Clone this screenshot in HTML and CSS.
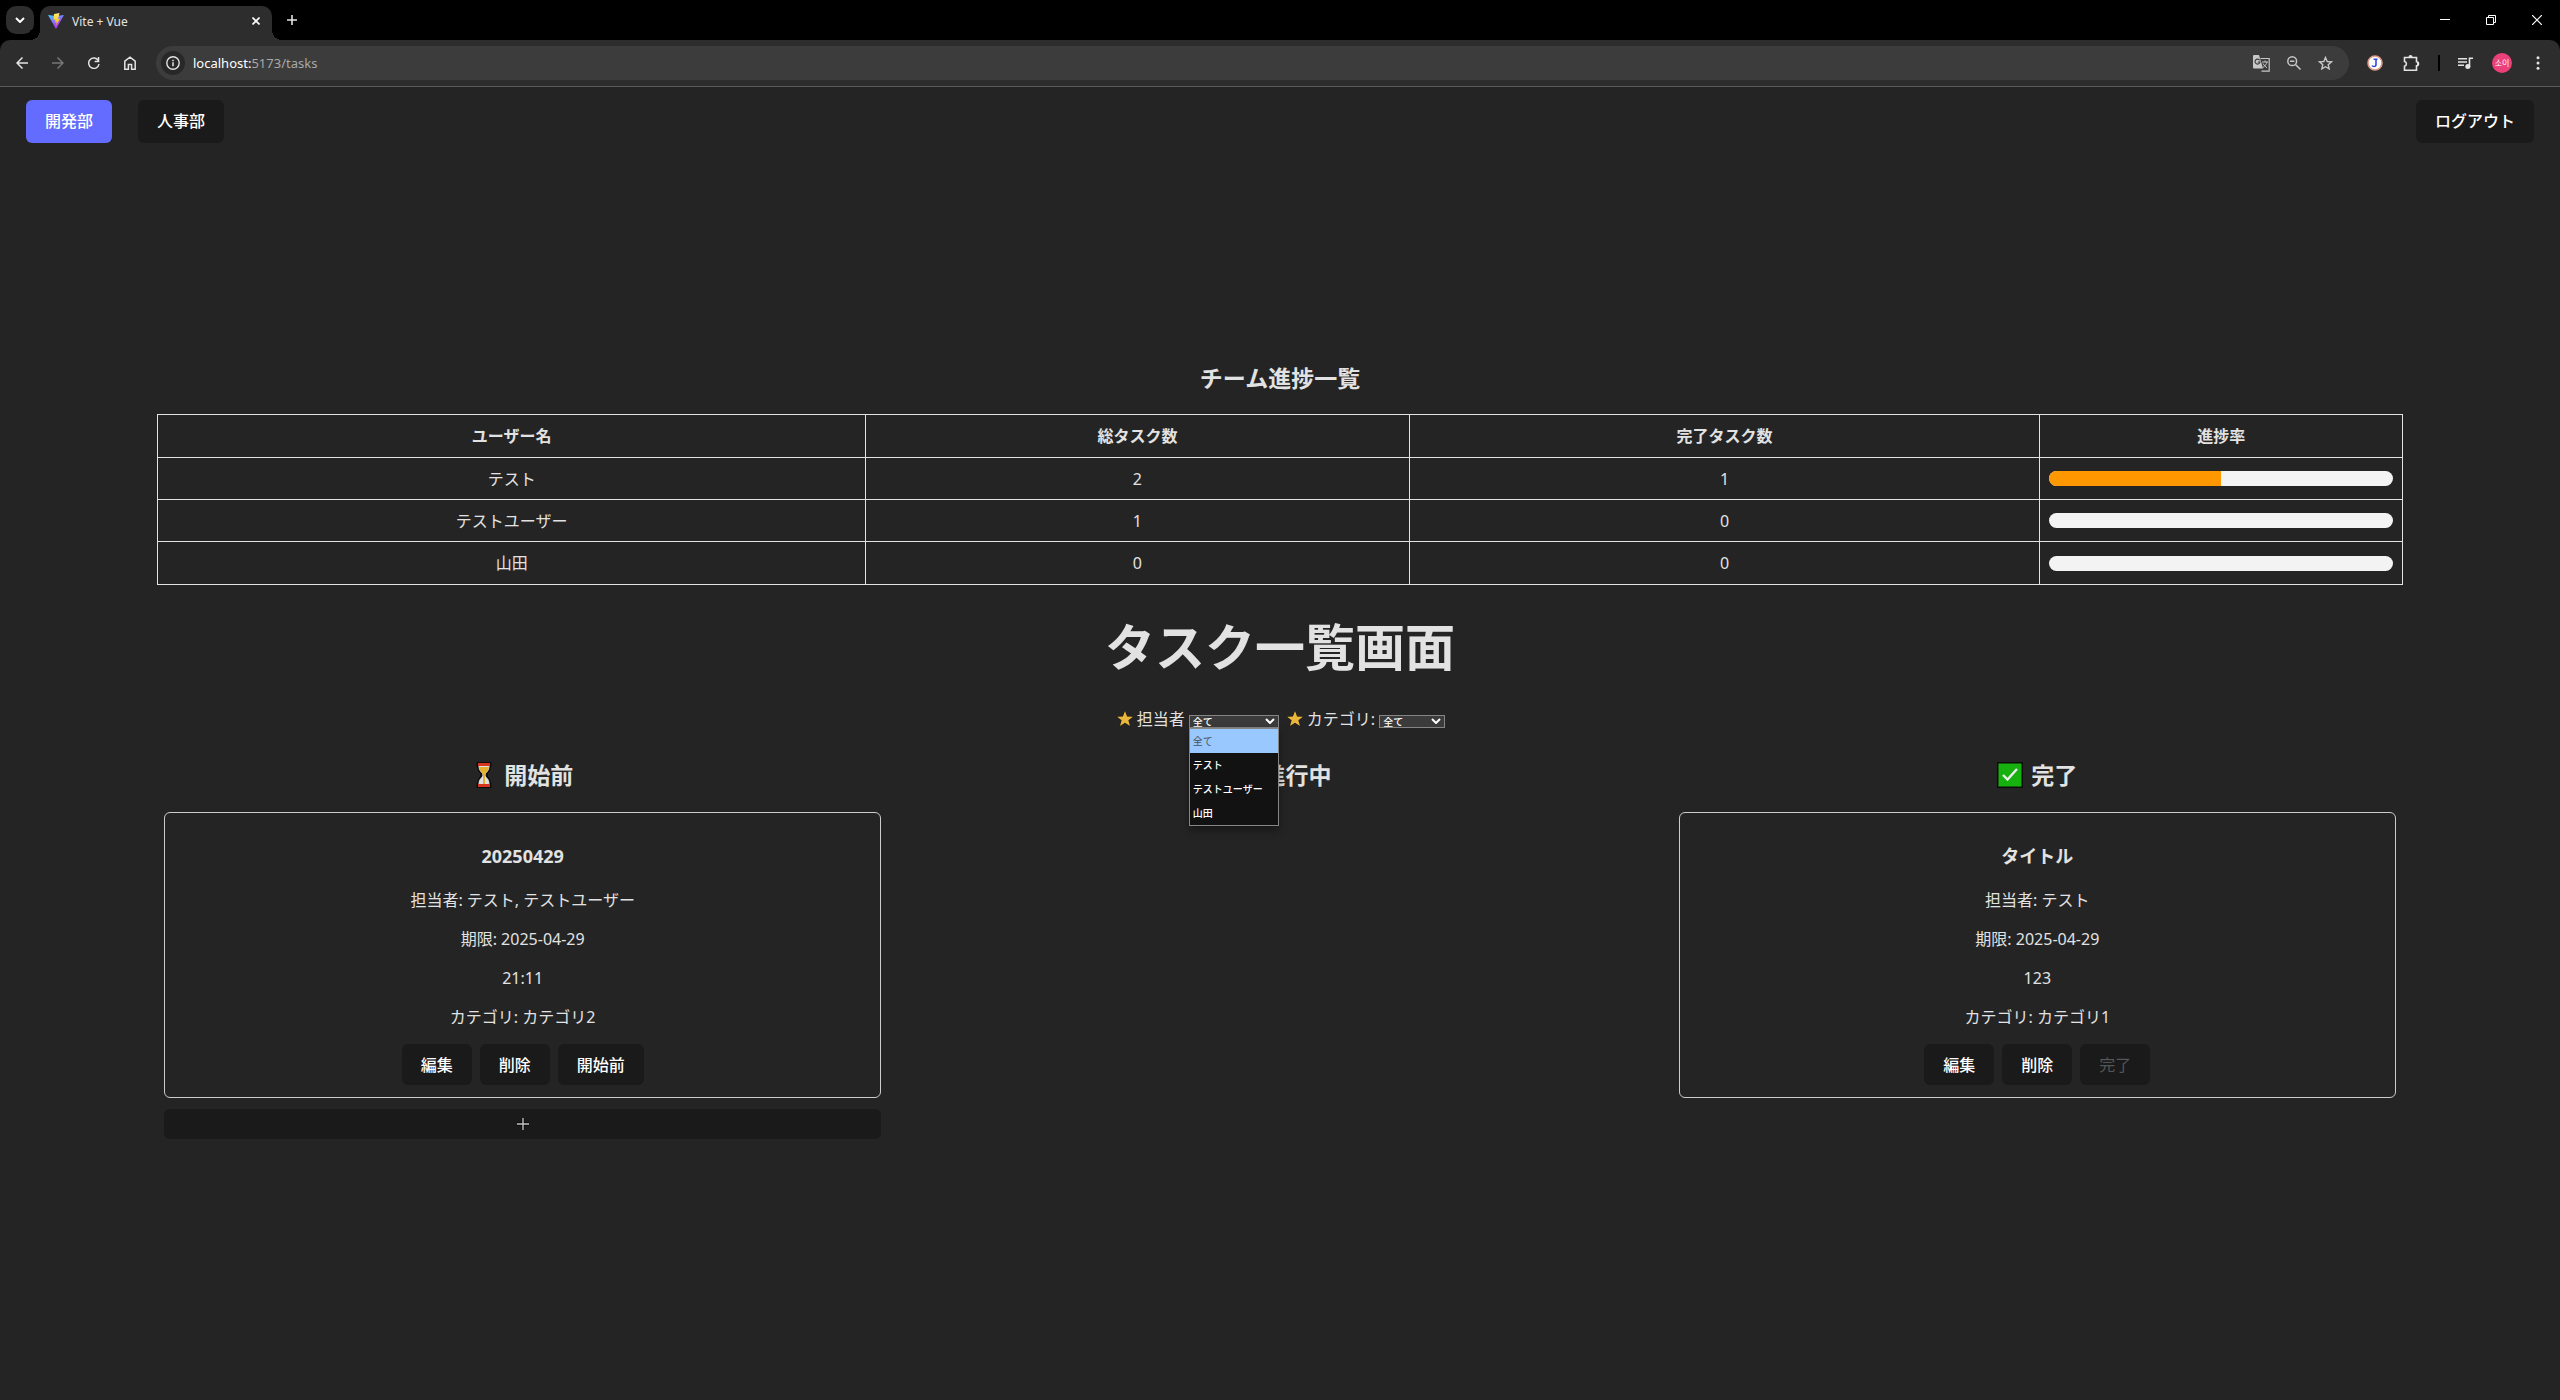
FILE: index.html
```html
<!DOCTYPE html>
<html lang="ja">
<head>
<meta charset="utf-8">
<title>Vite + Vue</title>
<meta name="viewport" content="width=device-width, initial-scale=1">
<link rel="stylesheet" href="styles.css">
</head>
<body>
<header class="browser">
  <div class="tabstrip">
    <button class="tab-search" aria-label="タブを検索"><svg width="10" height="6" viewBox="0 0 10 6"><path d="M1 1l4 4 4-4" fill="none" stroke="#fff" stroke-width="2"/></svg></button>
    <div class="tab">
      <svg width="16" height="16" viewBox="0 0 16 16"><defs><linearGradient id="v" x1="0" y1="0" x2="0.6" y2="1"><stop offset="0" stop-color="#41d1ff"/><stop offset=".7" stop-color="#a04cff"/><stop offset="1" stop-color="#bd34fe"/></linearGradient><linearGradient id="b" x1="0" y1="0" x2="0" y2="1"><stop offset="0" stop-color="#ffea83"/><stop offset=".4" stop-color="#ffdd35"/><stop offset="1" stop-color="#ff9a10"/></linearGradient></defs><path d="M0 2l8 1 8-1-8 14z" fill="url(#v)"/><path d="M11.500 0L6 1l-.4 6 2-.4-.6 3 1.600-.5-.8 3.600 4.200-7-2 .3z" fill="url(#b)"/></svg>
      <span class="tab-title">Vite + Vue</span>
      <button class="icon-button" aria-label="タブを閉じる"><svg width="8" height="8" viewBox="0 0 8 8"><path d="M.5.5l7 7M7.500.5l-7 7" stroke="#fff" stroke-width="1.600"/></svg></button>
    </div>
    <button class="icon-button new-tab" aria-label="新しいタブ"><svg width="10" height="10" viewBox="0 0 10 10"><path d="M5 0v10M0 5h10" stroke="#e3e3e3" stroke-width="1.600"/></svg></button>
    <div class="window-controls">
      <button class="icon-button" aria-label="最小化"><svg width="10" height="10" viewBox="0 0 10 10"><path d="M0 4.500h10" stroke="#fff"/></svg></button>
      <button class="icon-button" aria-label="元に戻す"><svg width="10" height="10" viewBox="0 0 10 10"><path d="M.5 2.500h7v7h-7zM2.500 2.500v-2h7v7h-2" fill="none" stroke="#fff"/></svg></button>
      <button class="icon-button" aria-label="閉じる"><svg width="10" height="10" viewBox="0 0 10 10"><path d="M0 0l10 10M10 0L0 10" stroke="#fff" stroke-width="1.200"/></svg></button>
    </div>
  </div>
  <div class="toolbar">
    <div class="nav">
      <button class="icon-button" aria-label="戻る"><svg width="12" height="12" viewBox="0 0 12 12"><path d="M12 6H1M6.500.5L1 6l5.500 5.500" fill="none" stroke="#e3e3e3" stroke-width="1.500"/></svg></button>
      <button class="icon-button" aria-label="進む" disabled><svg width="12" height="12" viewBox="0 0 12 12"><path d="M0 6h11M5.500.5L11 6l-5.500 5.500" fill="none" stroke="#757575" stroke-width="1.500"/></svg></button>
      <button class="icon-button" aria-label="再読み込み"><svg width="12" height="12" viewBox="0 0 12 12"><path d="M10.300 3.500A5.200 5.200 0 1 0 11 7" fill="none" stroke="#e3e3e3" stroke-width="1.500"/><path d="M11.300 0v5.200H6.600V3.700h3.200V0z" fill="#e3e3e3"/></svg></button>
      <button class="icon-button" aria-label="ホーム"><svg width="12" height="14" viewBox="0 0 12 14"><path d="M.8 13.200v-8L6 1.200l5.200 4v8H7.600V8.500H4.400v4.700z" fill="none" stroke="#e3e3e3" stroke-width="1.500"/></svg></button>
    </div>
    <div class="omnibox">
      <button class="site-info" aria-label="サイト情報"><svg width="14" height="14" viewBox="0 0 14 14"><circle cx="7" cy="7" r="6.200" fill="none" stroke="#e3e3e3" stroke-width="1.400"/><path d="M7 6.300V10.200M7 3.700v1.500" stroke="#e3e3e3" stroke-width="1.500"/></svg></button>
      <p class="url"><span class="host">localhost:</span>5173/tasks</p>
      <button class="icon-button" aria-label="翻訳"><svg width="17" height="17" viewBox="0 0 17 17"><path d="M7.500 3.500h8.700v12.700H8.500" fill="none" stroke="#c7c7c7" stroke-width="1.200"/><path d="M1 0h5l4 13.500H1a1 1 0 0 1-1-1V1a1 1 0 0 1 1-1z" fill="#c7c7c7"/><path d="M6.700 5.300A2.500 2.500 0 1 0 7 7H4.700" fill="none" stroke="#3c3c3c" stroke-width="1.200"/><path d="M9 7h6M12 5.500V7M14 7c-.5 2-2 4-4 5.500M10 8.500c1 2 2.500 3.200 4 4.200" fill="none" stroke="#c7c7c7"/></svg></button>
      <button class="icon-button" aria-label="ズーム"><svg width="14" height="14" viewBox="0 0 14 14"><circle cx="5.200" cy="5.200" r="4.400" fill="none" stroke="#c7c7c7" stroke-width="1.500"/><path d="M8.500 8.500l5 5M3 5.200h4.400" stroke="#c7c7c7" stroke-width="1.500"/></svg></button>
      <button class="icon-button" aria-label="ブックマーク"><svg width="15" height="14" viewBox="0 0 15 14"><path d="M7.500 1.500l1.700 4 4.300.4-3.300 2.800 1 4.200-3.700-2.200-3.700 2.200 1-4.200L1.500 5.900l4.300-.4z" fill="none" stroke="#c7c7c7" stroke-width="1.400"/></svg></button>
    </div>
    <div class="extensions">
      <button class="icon-button extension" aria-label="拡張機能 J"><svg width="16" height="16" viewBox="0 0 16 16"><circle cx="8" cy="8" r="7" fill="#fff" stroke="#dc9a83" stroke-width="1.600"/><path d="M6.500 4.200h4M9 4.200v5.300q0 2-2 2-1.500 0-2-1" fill="none" stroke="#3545e8" stroke-width="1.600"/></svg></button>
      <button class="icon-button" aria-label="拡張機能"><svg width="17" height="17" viewBox="0 0 17 17"><path d="M1.500 2.500h12v4.200a2 2 0 0 1 0 4v4.500h-12v-4a2.400 2.400 0 0 0 0-4.700z" fill="none" stroke="#e3e3e3" stroke-width="1.600"/><path d="M5.500 2a2 2 0 0 1 4 0zM14 6.800a2 2 0 0 1 0 4z" fill="#e3e3e3"/></svg></button>
      <span class="divider"></span>
      <button class="icon-button" aria-label="メディア"><svg width="16" height="13" viewBox="0 0 16 13"><path d="M0 1.800h9M0 5h9M0 8.200h6" stroke="#e3e3e3" stroke-width="1.500"/><circle cx="9.800" cy="9.500" r="2.500" fill="#e3e3e3"/><path d="M11.500 10V1.300H15" fill="none" stroke="#e3e3e3" stroke-width="1.600"/></svg></button>
      <button class="avatar" aria-label="プロフィール">소이</button>
      <button class="icon-button" aria-label="メニュー"><svg width="4" height="14" viewBox="0 0 4 14"><g fill="#e3e3e3"><circle cx="2" cy="1.700" r="1.500"/><circle cx="2" cy="7" r="1.500"/><circle cx="2" cy="12.300" r="1.500"/></g></svg></button>
    </div>
  </div>
</header>

<nav class="teams">
  <button class="button active">開発部</button>
  <button class="button">人事部</button>
  <button class="button logout">ログアウト</button>
</nav>

<main class="page">
  <h2 class="heading">チーム進捗一覧</h2>
  <table class="progress-table">
    <colgroup><col class="col-user"><col class="col-total"><col class="col-done"><col class="col-rate"></colgroup>
    <thead><tr><th>ユーザー名</th><th>総タスク数</th><th>完了タスク数</th><th>進捗率</th></tr></thead>
    <tbody>
      <tr><td>テスト</td><td>2</td><td>1</td><td><div class="bar"><div class="bar-fill" style="width:50%"></div></div></td></tr>
      <tr><td>テストユーザー</td><td>1</td><td>0</td><td><div class="bar"></div></td></tr>
      <tr><td>山田</td><td>0</td><td>0</td><td><div class="bar"></div></td></tr>
    </tbody>
  </table>

  <h1 class="title">タスク一覧画面</h1>

  <div class="filters">
    <svg class="star" width="16" height="16" viewBox="0 0 16 16"><path d="M8 0l2.100 5.500 5.900.2-4.600 3.600 1.600 5.700-5-3.300L3 15l1.600-5.700L0 5.700l5.900-.2z" fill="#e9b53a" stroke="#111" stroke-width="1" paint-order="stroke"/></svg>
    <label for="member">担当者</label>
    <div class="select-wrap member">
      <select id="member"><option>全て</option><option>テスト</option><option>テストユーザー</option><option>山田</option></select>
      <svg class="chevron" width="10" height="6" viewBox="0 0 10 6"><path d="M1 1l4 4 4-4" fill="none" stroke="#fff" stroke-width="2"/></svg>
      <ul class="menu"><li class="selected">全て</li><li>テスト</li><li>テストユーザー</li><li>山田</li></ul>
    </div>
    <svg class="star second" width="16" height="16" viewBox="0 0 16 16"><path d="M8 0l2.100 5.500 5.900.2-4.600 3.600 1.600 5.700-5-3.300L3 15l1.600-5.700L0 5.700l5.900-.2z" fill="#e9b53a" stroke="#111" stroke-width="1" paint-order="stroke"/></svg>
    <label for="category">カテゴリ:</label>
    <div class="select-wrap category">
      <select id="category"><option>全て</option></select>
      <svg class="chevron" width="10" height="6" viewBox="0 0 10 6"><path d="M1 1l4 4 4-4" fill="none" stroke="#fff" stroke-width="2"/></svg>
    </div>
  </div>

  <div class="board">
    <section class="column">
      <h2 class="heading"><svg width="24" height="26" viewBox="0 0 24 26"><path d="M5 0h14v5l-1 1c0 4-3 5-3 7s3 3 3 7l1 1v5H5v-5l1-1c0-4 3-5 3-7S6 10 6 6L5 5z" fill="#0c0c0c" stroke="#0c0c0c"/><path d="M7 4h10c0 6-4 6-4 9s4 3 4 9H7c0-6 4-6 4-9S7 10 7 4z" fill="#e2e2e2" stroke="#e2e2e2"/><path d="M7 5h10c-1 5-3 5-4 8v9h-2v-9C10 10 8 10 7 5z" fill="#e3b02f"/><path d="M6 1h12v3H6zM6 22h12v3H6z" fill="#d8361c"/></svg>開始前</h2>
      <article class="card">
        <h3>20250429</h3>
        <p>担当者: テスト, テストユーザー</p>
        <p>期限: 2025-04-29</p>
        <p>21:11</p>
        <p>カテゴリ: カテゴリ2</p>
        <div class="actions"><button class="button">編集</button><button class="button">削除</button><button class="button">開始前</button></div>
      </article>
      <button class="add" aria-label="タスクを追加"><svg width="12" height="12" viewBox="0 0 12 12"><path d="M6 0v12M0 6h12" stroke="#000" stroke-width="3"/><path d="M6 0v12M0 6h12" stroke="#c4c4c4" stroke-width="1.400"/></svg></button>
    </section>
    <section class="column">
      <h2 class="heading"><svg width="26" height="26" viewBox="0 0 26 26"><path d="M4 12a8 8 0 0 1 14-4M20 14a8 8 0 0 1-14 4M18 3v5h-5M6 23v-5h5" fill="none" stroke="#3a96dd" stroke-width="3"/></svg>進行中</h2>
    </section>
    <section class="column">
      <h2 class="heading"><svg width="26" height="26" viewBox="0 0 26 26"><path d="M0 0h26v26H0z" fill="#0c0c0c"/><path d="M1.500 1.500h23v23h-23z" fill="#16b00f"/><path d="M6 13l4.500 4.500L20 7" fill="none" stroke="#ececec" stroke-width="2.400"/></svg>完了</h2>
      <article class="card">
        <h3>タイトル</h3>
        <p>担当者: テスト</p>
        <p>期限: 2025-04-29</p>
        <p>123</p>
        <p>カテゴリ: カテゴリ1</p>
        <div class="actions"><button class="button">編集</button><button class="button">削除</button><button class="button" disabled>完了</button></div>
      </article>
    </section>
  </div>
</main>
</body>
</html>
```
FILE: styles.css
```css
* { box-sizing: border-box; }
body { margin: 0; min-height: 100vh; background: #242424; color: #e2e2e2; font: 16px/24px "Noto Sans", "Noto Sans CJK JP", sans-serif; }
button { border: 0; padding: 0; font-family: inherit; color: #fff; }
svg { display: block; flex: none; }
h1, h2, h3, p, ul { margin: 0; padding: 0; }

/* Browser frame */
.browser { background: #000; }
.tabstrip { display: flex; align-items: center; height: 40px; padding-left: 6px; }
.tab-search { width: 28px; height: 28px; display: grid; place-items: center; border-radius: 10px; background: #2d2d2d; }
.tab { position: relative; display: flex; align-items: center; align-self: flex-end; gap: 8px; width: 232px; height: 34px; margin-left: 6px; padding: 0 12px 4px 8px; border-radius: 10px 10px 0 0; background: #2d2d2d; }
.tab::before, .tab::after { content: ""; position: absolute; bottom: 0; width: 10px; height: 10px; }
.tab::before { left: -10px; background: radial-gradient(circle at 0 0, #000 10px, #2d2d2d 10px); }
.tab::after { right: -10px; background: radial-gradient(circle at 100% 0, #000 10px, #2d2d2d 10px); }
.tab-title { flex: 1; padding-top: 2px; font-size: 12px; line-height: 16px; color: #e3e3e3; }
.icon-button { display: grid; place-items: center; background: none; }
.new-tab { margin-left: 15px; }
.window-controls { display: flex; gap: 36px; margin-left: auto; padding-right: 18px; }
.toolbar { display: flex; align-items: center; height: 47px; padding: 0 20px 0 16px; border-radius: 10px 10px 0 0; border-bottom: 1px solid #5a5a5a; background: #2d2d2d; }
.nav { display: flex; align-items: center; gap: 24px; }
.omnibox { flex: 1; display: flex; align-items: center; gap: 17px; height: 34px; margin: 0 18px 0 20px; padding: 0 16px 0 5px; border-radius: 17px; background: #3c3c3c; }
.site-info { width: 24px; height: 24px; display: grid; place-items: center; border-radius: 50%; background: #282828; }
.url { flex: 1; margin-left: -9px; font-size: 13px; line-height: 20px; color: #a8a8a8; }
.host { color: #fff; }
.extensions { display: flex; align-items: center; gap: 18px; }
.extension { margin-right: 2px; }
.divider { width: 2px; height: 16px; background: #000; }
.avatar { width: 20px; height: 20px; margin-right: 6px; border-radius: 50%; background: #ec407a; font: 8px/20px "Noto Sans CJK KR", sans-serif; text-align: center; }

/* Shared controls */
.button { height: 41px; padding: 0 19px; border-radius: 6px; background: #1a1a1a; color: #fff; font-size: 16px; font-weight: 500; line-height: 24px; }
.button:disabled { color: #555; font-weight: 400; }
.active { background: #646cff; }
.teams { display: flex; gap: 26px; padding: 13px 26px; }
.teams .button { height: 43px; padding-bottom: 2px; }
.logout { margin-left: auto; }

/* Page */
.page { padding: 204px 157px 0; text-align: center; }
.heading { display: flex; justify-content: center; align-items: center; gap: 8px; font-size: 23px; line-height: 36px; }
.progress-table { width: 100%; margin-top: 18px; border-collapse: collapse; table-layout: fixed; }
.progress-table th, .progress-table td { height: 42px; padding: 8px 9px; border: 1px solid #e2e2e2; line-height: 24px; }
.progress-table th, .progress-table tr:last-child td { height: 43px; }
.col-user { width: 31.550%; }
.col-total { width: 24.200%; }
.col-done { width: 28.100%; }
.bar { height: 15px; border-radius: 8px; overflow: hidden; background: #f3f3f3; }
.bar-fill { height: 100%; background: #ff9800; }
.title { margin-top: 32px; font-size: 50px; line-height: 60px; }
.filters { display: flex; justify-content: center; align-items: center; gap: 4px; margin-top: 30px; padding-left: 2px; }
.second { margin-left: 4px; }
.select-wrap { position: relative; height: 13px; margin-top: 4px; }
.member { width: 90px; }
.category { width: 66px; }
select { display: block; width: 100%; height: 13px; padding: 0 3px; border: 1px solid #858585; border-radius: 0; appearance: none; background: #3b3b3b; color: #fff; font: 500 10px/11px "Noto Sans CJK JP", sans-serif; }
.chevron { position: absolute; top: 3px; right: 4px; pointer-events: none; }
.menu { position: absolute; top: 13px; left: 0; z-index: 1; width: 90px; border: 1px solid #858585; background: #121212; box-shadow: 0 4px 8px #0006; list-style: none; text-align: left; color: #fff; font: 500 10px/24px "Noto Sans CJK JP", sans-serif; }
.menu li { height: 24px; padding-left: 3px; white-space: nowrap; }
.menu .selected { background: #99c8ff; color: #4a5058; font-weight: 400; }
.board { display: grid; grid-template-columns: repeat(3, 1fr); gap: 40px; padding: 26px 7px 0; }
.card { margin-top: 19px; padding: 29px 12px 12px; border: 1px solid #ccc; border-radius: 6px; }
.card h3 { margin-bottom: 18px; font-size: 18px; line-height: 28px; }
.card p { margin-bottom: 15px; }
.actions { display: flex; justify-content: center; gap: 8px; }
.add { display: grid; place-items: center; width: 100%; height: 30px; margin-top: 11px; border-radius: 6px; background: #1a1a1a; }
```
